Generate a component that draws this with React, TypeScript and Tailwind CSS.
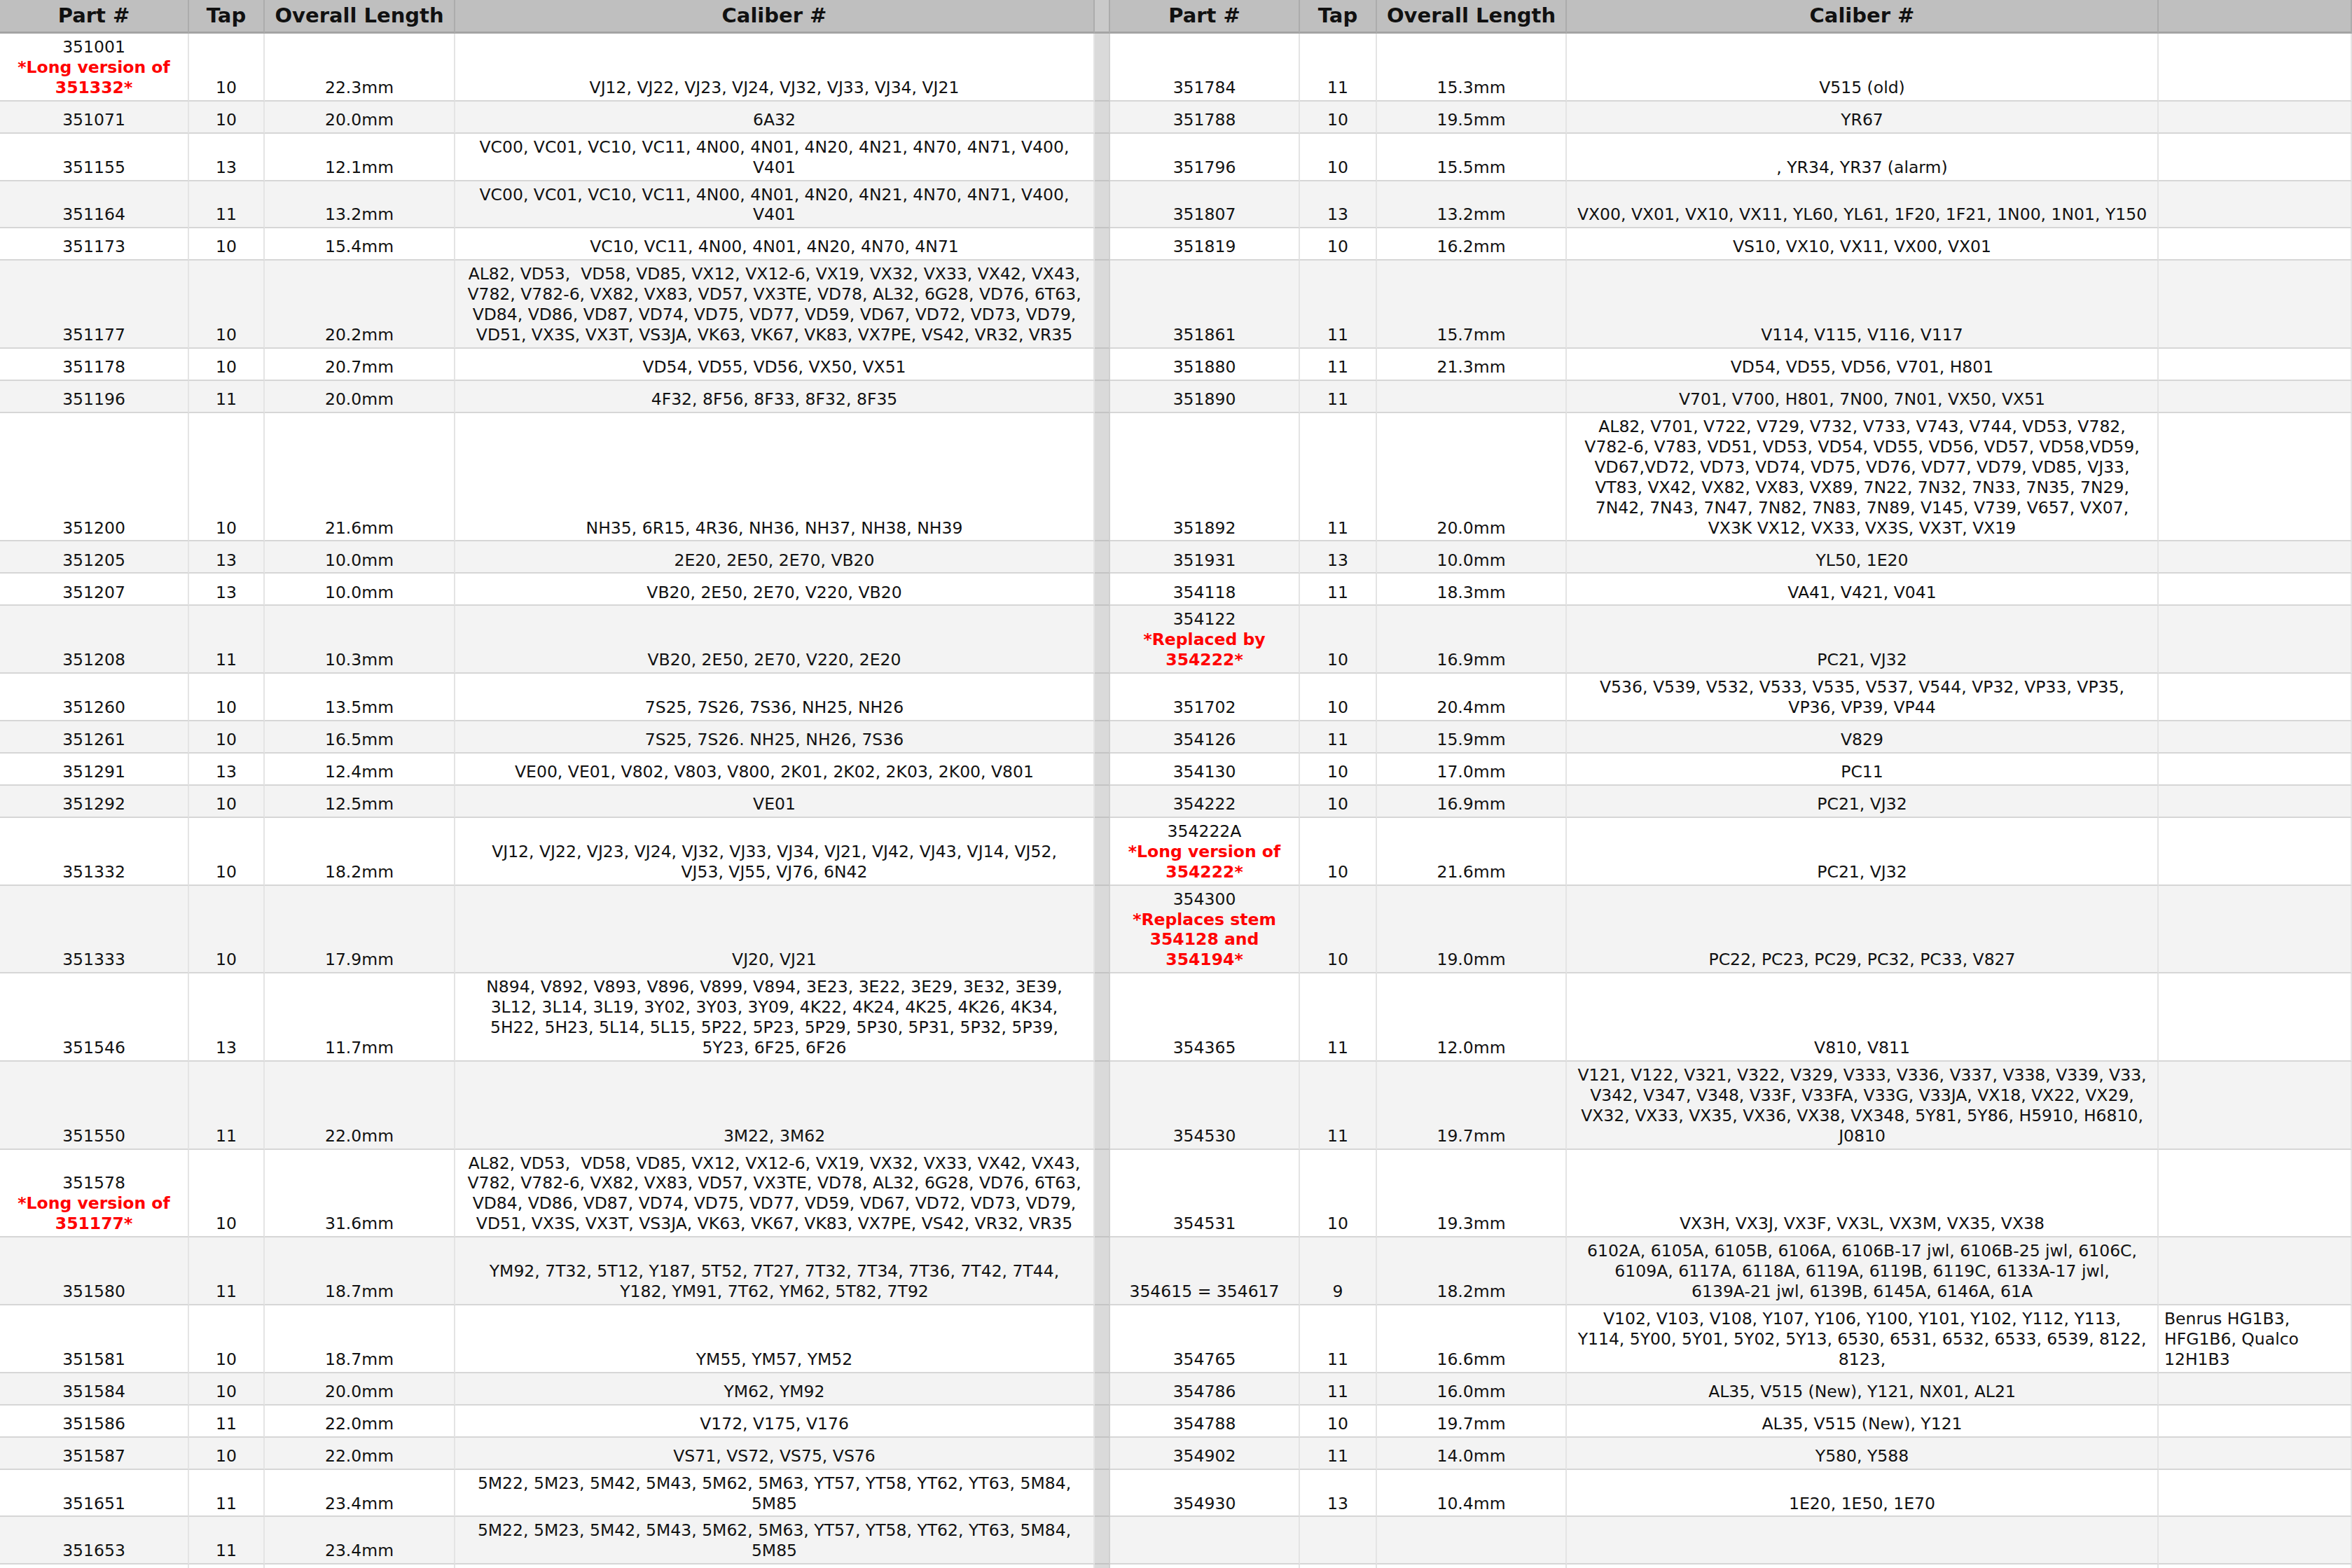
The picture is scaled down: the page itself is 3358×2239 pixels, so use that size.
import React from 'react'

type Side = {
  part: string
  note?: string[]
  tap: string
  len: string
  cal: string[]
  extra?: string[]
}

type Row = { l?: Side; r?: Side }

const cal351177 = [
  'AL82, VD53,  VD58, VD85, VX12, VX12-6, VX19, VX32, VX33, VX42, VX43,',
  'V782, V782-6, VX82, VX83, VD57, VX3TE, VD78, AL32, 6G28, VD76, 6T63,',
  'VD84, VD86, VD87, VD74, VD75, VD77, VD59, VD67, VD72, VD73, VD79,',
  'VD51, VX3S, VX3T, VS3JA, VK63, VK67, VK83, VX7PE, VS42, VR32, VR35',
]
const calVC = ['VC00, VC01, VC10, VC11, 4N00, 4N01, 4N20, 4N21, 4N70, 4N71, V400,', 'V401']
const cal5M = ['5M22, 5M23, 5M42, 5M43, 5M62, 5M63, YT57, YT58, YT62, YT63, 5M84,', '5M85']

const rows: Row[] = [
  {
    l: { part: '351001', note: ['*Long version of', '351332*'], tap: '10', len: '22.3mm', cal: ['VJ12, VJ22, VJ23, VJ24, VJ32, VJ33, VJ34, VJ21'] },
    r: { part: '351784', tap: '11', len: '15.3mm', cal: ['V515 (old)'] },
  },
  {
    l: { part: '351071', tap: '10', len: '20.0mm', cal: ['6A32'] },
    r: { part: '351788', tap: '10', len: '19.5mm', cal: ['YR67'] },
  },
  {
    l: { part: '351155', tap: '13', len: '12.1mm', cal: calVC },
    r: { part: '351796', tap: '10', len: '15.5mm', cal: [', YR34, YR37 (alarm)'] },
  },
  {
    l: { part: '351164', tap: '11', len: '13.2mm', cal: calVC },
    r: { part: '351807', tap: '13', len: '13.2mm', cal: ['VX00, VX01, VX10, VX11, YL60, YL61, 1F20, 1F21, 1N00, 1N01, Y150'] },
  },
  {
    l: { part: '351173', tap: '10', len: '15.4mm', cal: ['VC10, VC11, 4N00, 4N01, 4N20, 4N70, 4N71'] },
    r: { part: '351819', tap: '10', len: '16.2mm', cal: ['VS10, VX10, VX11, VX00, VX01'] },
  },
  {
    l: { part: '351177', tap: '10', len: '20.2mm', cal: cal351177 },
    r: { part: '351861', tap: '11', len: '15.7mm', cal: ['V114, V115, V116, V117'] },
  },
  {
    l: { part: '351178', tap: '10', len: '20.7mm', cal: ['VD54, VD55, VD56, VX50, VX51'] },
    r: { part: '351880', tap: '11', len: '21.3mm', cal: ['VD54, VD55, VD56, V701, H801'] },
  },
  {
    l: { part: '351196', tap: '11', len: '20.0mm', cal: ['4F32, 8F56, 8F33, 8F32, 8F35'] },
    r: { part: '351890', tap: '11', len: '', cal: ['V701, V700, H801, 7N00, 7N01, VX50, VX51'] },
  },
  {
    l: { part: '351200', tap: '10', len: '21.6mm', cal: ['NH35, 6R15, 4R36, NH36, NH37, NH38, NH39'] },
    r: {
      part: '351892',
      tap: '11',
      len: '20.0mm',
      cal: [
        'AL82, V701, V722, V729, V732, V733, V743, V744, VD53, V782,',
        'V782-6, V783, VD51, VD53, VD54, VD55, VD56, VD57, VD58,VD59,',
        'VD67,VD72, VD73, VD74, VD75, VD76, VD77, VD79, VD85, VJ33,',
        'VT83, VX42, VX82, VX83, VX89, 7N22, 7N32, 7N33, 7N35, 7N29,',
        '7N42, 7N43, 7N47, 7N82, 7N83, 7N89, V145, V739, V657, VX07,',
        'VX3K VX12, VX33, VX3S, VX3T, VX19',
      ],
    },
  },
  {
    l: { part: '351205', tap: '13', len: '10.0mm', cal: ['2E20, 2E50, 2E70, VB20'] },
    r: { part: '351931', tap: '13', len: '10.0mm', cal: ['YL50, 1E20'] },
  },
  {
    l: { part: '351207', tap: '13', len: '10.0mm', cal: ['VB20, 2E50, 2E70, V220, VB20'] },
    r: { part: '354118', tap: '11', len: '18.3mm', cal: ['VA41, V421, V041'] },
  },
  {
    l: { part: '351208', tap: '11', len: '10.3mm', cal: ['VB20, 2E50, 2E70, V220, 2E20'] },
    r: { part: '354122', note: ['*Replaced by', '354222*'], tap: '10', len: '16.9mm', cal: ['PC21, VJ32'] },
  },
  {
    l: { part: '351260', tap: '10', len: '13.5mm', cal: ['7S25, 7S26, 7S36, NH25, NH26'] },
    r: {
      part: '351702',
      tap: '10',
      len: '20.4mm',
      cal: ['V536, V539, V532, V533, V535, V537, V544, VP32, VP33, VP35,', 'VP36, VP39, VP44'],
    },
  },
  {
    l: { part: '351261', tap: '10', len: '16.5mm', cal: ['7S25, 7S26. NH25, NH26, 7S36'] },
    r: { part: '354126', tap: '11', len: '15.9mm', cal: ['V829'] },
  },
  {
    l: { part: '351291', tap: '13', len: '12.4mm', cal: ['VE00, VE01, V802, V803, V800, 2K01, 2K02, 2K03, 2K00, V801'] },
    r: { part: '354130', tap: '10', len: '17.0mm', cal: ['PC11'] },
  },
  {
    l: { part: '351292', tap: '10', len: '12.5mm', cal: ['VE01'] },
    r: { part: '354222', tap: '10', len: '16.9mm', cal: ['PC21, VJ32'] },
  },
  {
    l: {
      part: '351332',
      tap: '10',
      len: '18.2mm',
      cal: ['VJ12, VJ22, VJ23, VJ24, VJ32, VJ33, VJ34, VJ21, VJ42, VJ43, VJ14, VJ52,', 'VJ53, VJ55, VJ76, 6N42'],
    },
    r: { part: '354222A', note: ['*Long version of', '354222*'], tap: '10', len: '21.6mm', cal: ['PC21, VJ32'] },
  },
  {
    l: { part: '351333', tap: '10', len: '17.9mm', cal: ['VJ20, VJ21'] },
    r: {
      part: '354300',
      note: ['*Replaces stem', '354128 and', '354194*'],
      tap: '10',
      len: '19.0mm',
      cal: ['PC22, PC23, PC29, PC32, PC33, V827'],
    },
  },
  {
    l: {
      part: '351546',
      tap: '13',
      len: '11.7mm',
      cal: [
        'N894, V892, V893, V896, V899, V894, 3E23, 3E22, 3E29, 3E32, 3E39,',
        '3L12, 3L14, 3L19, 3Y02, 3Y03, 3Y09, 4K22, 4K24, 4K25, 4K26, 4K34,',
        '5H22, 5H23, 5L14, 5L15, 5P22, 5P23, 5P29, 5P30, 5P31, 5P32, 5P39,',
        '5Y23, 6F25, 6F26',
      ],
    },
    r: { part: '354365', tap: '11', len: '12.0mm', cal: ['V810, V811'] },
  },
  {
    l: { part: '351550', tap: '11', len: '22.0mm', cal: ['3M22, 3M62'] },
    r: {
      part: '354530',
      tap: '11',
      len: '19.7mm',
      cal: [
        'V121, V122, V321, V322, V329, V333, V336, V337, V338, V339, V33,',
        'V342, V347, V348, V33F, V33FA, V33G, V33JA, VX18, VX22, VX29,',
        'VX32, VX33, VX35, VX36, VX38, VX348, 5Y81, 5Y86, H5910, H6810,',
        'J0810',
      ],
    },
  },
  {
    l: { part: '351578', note: ['*Long version of', '351177*'], tap: '10', len: '31.6mm', cal: cal351177 },
    r: { part: '354531', tap: '10', len: '19.3mm', cal: ['VX3H, VX3J, VX3F, VX3L, VX3M, VX35, VX38'] },
  },
  {
    l: {
      part: '351580',
      tap: '11',
      len: '18.7mm',
      cal: ['YM92, 7T32, 5T12, Y187, 5T52, 7T27, 7T32, 7T34, 7T36, 7T42, 7T44,', 'Y182, YM91, 7T62, YM62, 5T82, 7T92'],
    },
    r: {
      part: '354615 = 354617',
      tap: '9',
      len: '18.2mm',
      cal: [
        '6102A, 6105A, 6105B, 6106A, 6106B-17 jwl, 6106B-25 jwl, 6106C,',
        '6109A, 6117A, 6118A, 6119A, 6119B, 6119C, 6133A-17 jwl,',
        '6139A-21 jwl, 6139B, 6145A, 6146A, 61A',
      ],
    },
  },
  {
    l: { part: '351581', tap: '10', len: '18.7mm', cal: ['YM55, YM57, YM52'] },
    r: {
      part: '354765',
      tap: '11',
      len: '16.6mm',
      cal: [
        'V102, V103, V108, Y107, Y106, Y100, Y101, Y102, Y112, Y113,',
        'Y114, 5Y00, 5Y01, 5Y02, 5Y13, 6530, 6531, 6532, 6533, 6539, 8122,',
        '8123,',
      ],
      extra: ['Benrus HG1B3,', 'HFG1B6, Qualco', '12H1B3'],
    },
  },
  {
    l: { part: '351584', tap: '10', len: '20.0mm', cal: ['YM62, YM92'] },
    r: { part: '354786', tap: '11', len: '16.0mm', cal: ['AL35, V515 (New), Y121, NX01, AL21'] },
  },
  {
    l: { part: '351586', tap: '11', len: '22.0mm', cal: ['V172, V175, V176'] },
    r: { part: '354788', tap: '10', len: '19.7mm', cal: ['AL35, V515 (New), Y121'] },
  },
  {
    l: { part: '351587', tap: '10', len: '22.0mm', cal: ['VS71, VS72, VS75, VS76'] },
    r: { part: '354902', tap: '11', len: '14.0mm', cal: ['Y580, Y588'] },
  },
  {
    l: { part: '351651', tap: '11', len: '23.4mm', cal: cal5M },
    r: { part: '354930', tap: '13', len: '10.4mm', cal: ['1E20, 1E50, 1E70'] },
  },
  {
    l: { part: '351653', tap: '11', len: '23.4mm', cal: cal5M },
  },
  {},
]

const cellBase =
  'flex flex-col justify-end min-h-[46px] pt-[5px] pb-[3px] px-1 border-b-2 border-b-[#d6d6d6] border-r-2 border-r-[#e4e4e4] leading-[28.9px] whitespace-pre'

function Lines({ lines }: { lines: string[] }) {
  return (
    <>
      {lines.map((t, i) => (
        <div key={i}>{t}</div>
      ))}
    </>
  )
}

function SideCells({ side, bg, withExtra }: { side?: Side; bg: string; withExtra?: boolean }) {
  const c = `${cellBase} ${bg} items-center text-center`
  return (
    <>
      <div className={c}>
        {side && <div>{side.part}</div>}
        {side?.note?.map((n, i) => (
          <div key={i} className="font-bold text-[#ff0000]">
            {n}
          </div>
        ))}
      </div>
      <div className={c}>{side?.tap}</div>
      <div className={c}>{side?.len}</div>
      <div className={c}>{side && <Lines lines={side.cal} />}</div>
      {withExtra && (
        <div className={`${cellBase} ${bg} items-start text-left pl-2`}>
          {side?.extra && <Lines lines={side.extra} />}
        </div>
      )}
    </>
  )
}

const headCell =
  'flex items-center justify-center h-[48px] bg-[#bfbfbf] border-b-[3px] border-b-[#a4a4a4] border-r-2 border-r-[#acacac] font-bold text-[29px] text-[#111]'

export default function App() {
  const heads = ['Part #', 'Tap', 'Overall Length', 'Caliber #']
  return (
    <div className="w-[3358px] min-h-screen bg-white font-['DejaVu_Sans',Verdana,sans-serif] text-[23.5px] text-[#111]">
      <div className="grid grid-cols-[270px_108px_272px_913px_22px_271px_110px_271px_845px_276px]">
        {heads.map((h) => (
          <div key={'l' + h} className={headCell}>
            {h}
          </div>
        ))}
        <div className="h-[48px] bg-[#cacaca] border-b-[3px] border-b-[#a4a4a4] border-r-2 border-r-[#acacac]" />
        {heads.map((h) => (
          <div key={'r' + h} className={headCell}>
            {h}
          </div>
        ))}
        <div className={headCell} />

        {rows.map((row, i) => {
          const bg = i % 2 === 0 ? 'bg-white' : 'bg-[#f3f3f3]'
          return (
            <React.Fragment key={i}>
              <SideCells side={row.l} bg={bg} />
              <div className="bg-[#dadada] border-b-2 border-b-[#c4c4c4] border-r-2 border-r-[#d0d0d0]" />
              <SideCells side={row.r} bg={bg} withExtra />
            </React.Fragment>
          )
        })}
      </div>
    </div>
  )
}
